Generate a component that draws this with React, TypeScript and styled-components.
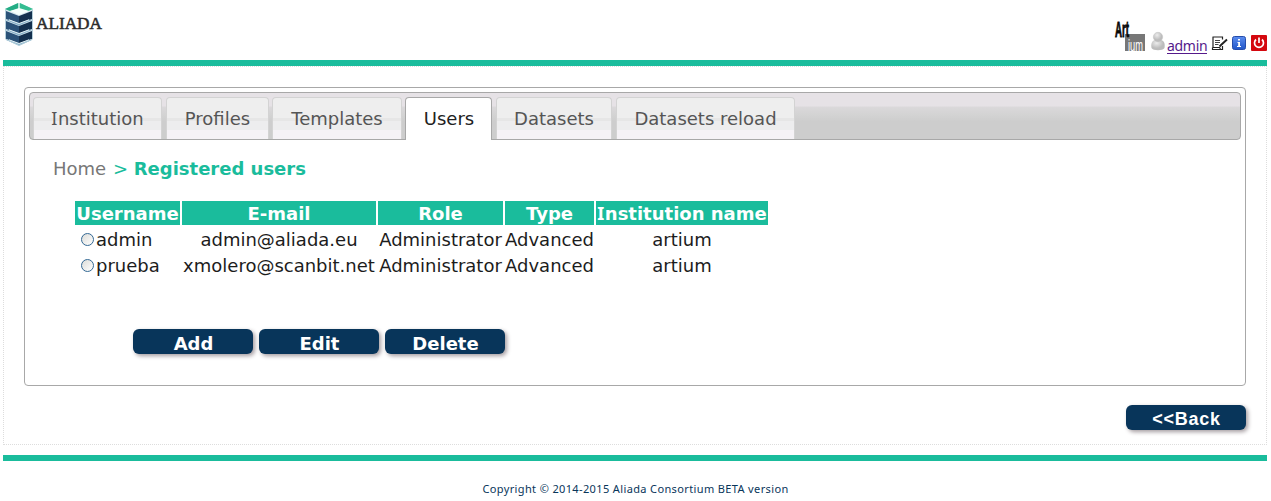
import React from 'react';
import styled, { createGlobalStyle, css } from 'styled-components';

const teal = '#1abc9c';
const navy = '#08355a';
const sans = "'DejaVu Sans', Verdana, sans-serif";

const GlobalStyle = createGlobalStyle`
  * { box-sizing: border-box; }
  body { margin: 0; background: #fff; font-family: ${sans}; font-size: 18px; color: #1c1c1c; overflow: hidden; }
`;

const Page = styled.div`
  width: 1264px;
  height: 501px;
  margin-left: 3px;
  display: flex;
  flex-direction: column;
`;

const Header = styled.header`
  height: 60px;
  flex: none;
  display: flex;
  justify-content: space-between;
`;

const Brand = styled.div`
  display: flex;
  padding: 2px 0 0 2px;
  svg { display: block; }
`;

const UserBar = styled.div`
  display: flex;
  align-items: flex-end;
  height: 55px;
  svg { display: block; flex: none; overflow: visible; }
`;

const IconSlot = styled.span<{ $left: number; $bottom: number }>`
  margin-left: ${(p) => p.$left}px;
  margin-bottom: ${(p) => p.$bottom}px;
`;

const UserLink = styled.a`
  font: 14px/20px 'Noto Sans', sans-serif;
  letter-spacing: -0.3px;
  width: 40px;
  height: 18px;
  margin-left: 2px;
  margin-bottom: 1px;
  white-space: nowrap;
  color: #551a8b;
  border-bottom: 1px solid #551a8b;
  text-decoration: none;
`;

const Rule = styled.div`
  height: 6px;
  flex: none;
  background: ${teal};
`;

const Content = styled.main`
  height: 379px;
  flex: none;
  margin-bottom: 10px;
  padding: 20px 20px 0;
  border: 1px dotted #ddd;
  display: flex;
  flex-direction: column;
`;

const Panel = styled.section`
  height: 299px;
  flex: none;
  padding: 4px;
  border: 1px solid #a8a8a8;
  border-radius: 4px;
`;

const TabBar = styled.nav`
  height: 48px;
  display: flex;
  align-items: flex-end;
  padding-left: 3px;
  border: 1px solid #a8a8a8;
  border-radius: 4px;
  background: linear-gradient(#e6e2e6 0 28%, #dad8da 31%, #d3d3d3 48%, #cdcdcd 62%, #cdcdcd);
`;

const Tab = styled.a<{ $width: number; $gap: number; $active?: boolean }>`
  width: ${(p) => p.$width}px;
  height: 42px;
  margin-right: ${(p) => p.$gap}px;
  padding-top: 1px;
  line-height: 40px;
  text-align: center;
  white-space: nowrap;
  color: #555;
  border: 1px solid #d3d3d3;
  border-bottom: 0;
  border-radius: 4px 4px 0 0;
  background: linear-gradient(#eee 0 50%, #e6e6e6 50% 57%, #ededee 57% 79%, #f5f2f6 79%);
  ${(p) => p.$active && css`
    height: 43px;
    margin-bottom: -1px;
    padding-left: 1px;
    color: #212121;
    border-color: #a8a8a8;
    background: #fff;
  `}
`;

const SlabI = styled.span`
  font-family: 'Noto Sans', sans-serif;
  line-height: 1;
  letter-spacing: 0.5px;
`;

const Breadcrumb = styled.div`
  margin: 17px 0 0 24px;
  height: 24px;
  line-height: 24px;
  color: ${teal};
  white-space: pre;
`;
const Muted = styled.span`
  color: #777;
  margin-right: 1px;
`;

const Table = styled.table`
  margin: 18px 0 0 44px;
  border-spacing: 2px;
  table-layout: fixed;
  width: 697px;
`;
const Th = styled.th<{ $width: number }>`
  width: ${(p) => p.$width}px;
  height: 24px;
  padding: 1px 0 0;
  line-height: 23px;
  white-space: nowrap;
  color: #fff;
  background: ${teal};
`;
const Td = styled.td<{ $left?: boolean }>`
  height: 24px;
  padding: 1px 0 0;
  line-height: 23px;
  white-space: nowrap;
  text-align: ${(p) => (p.$left ? 'left' : 'center')};
`;

const Choice = styled.label`
  display: flex;
  align-items: center;
`;
const Radio = styled.input`
  appearance: none;
  width: 13px;
  height: 13px;
  margin: 0 2px 0 6px;
  border: 1px solid #336894;
  border-radius: 50%;
  background: linear-gradient(135deg, #dcdcd8, #fff);
`;

const Actions = styled.div`
  display: flex;
  gap: 6px;
  margin: 50px 0 0 104px;
`;
const Button = styled.button<{ $back?: boolean }>`
  width: 120px;
  height: 25px;
  flex: none;
  padding: 2px 0 0 1px;
  border: 0;
  border-radius: 6px;
  background: ${navy};
  color: #fff;
  font: bold 18px/25px ${sans};
  box-shadow: 2px 2px 4px #a49ca0;
  ${(p) => p.$back && css`
    align-self: flex-end;
    margin-top: 19px;
    padding-top: 0;
    font: bold 18px/28px 'Liberation Sans', Arial, sans-serif;
    letter-spacing: 0.7px;
  `}
`;

const Footer = styled.footer`
  padding: 20px 0 0 1px;
  text-align: center;
  font: 11px/16px 'Noto Sans', sans-serif;
  letter-spacing: 0.37px;
  color: ${navy};
`;

const Institution = () => <><SlabI>I</SlabI>nstitution</>;

const tabs = [
  { label: <Institution />, width: 129, gap: 4 },
  { label: 'Profiles', width: 103, gap: 3 },
  { label: 'Templates', width: 130, gap: 3 },
  { label: 'Users', width: 87, gap: 4, active: true },
  { label: 'Datasets', width: 116, gap: 4 },
  { label: 'Datasets reload', width: 179, gap: 0 },
];

const users = [
  ['admin', 'admin@aliada.eu', 'Administrator', 'Advanced', 'artium'],
  ['prueba', 'xmolero@scanbit.net', 'Administrator', 'Advanced', 'artium'],
];

const AliadaLogo = () => (
  <svg width="100" height="46" viewBox="0 0 100 46">
    <path d="M0 7 14 1 28 7V37L14 44 0 37Z" fill="#d5e6ee" />
    <path d="M0 7 14 1 28 7 14 12Z" fill="#b8eadb" />
    <path d="M0 7 13 1V7L5 9Z" fill="#24ad85" />
    <path d="M15 1 28 7 23 9 15 7Z" fill="#34bd91" />
    <path d="M5 9 14 6 24 9 14 13Z" fill="#f4fffc" />
    {[0, 10, 20].map((y) => (
      <g key={y} transform={`translate(0 ${y})`}>
        <path d="M1 9 14 14V22L1 17Z" fill="#2b5278" />
        <path d="M14 14 27 9V17L14 22Z" fill="#14304e" />
        <path d="M1 18 4 17.5 14 21.5 24 17.5 27 18 14 23.5Z" fill="#86afc7" />
        <path d="M4 17.8 14 21.5 24 17.8" stroke="#e6f3f7" fill="none" strokeWidth="1" />
      </g>
    ))}
    <path d="M0.5 8V37L14 43.5 27.5 37V8" stroke="#b4cfdb" fill="none" />
    <text x="31" y="27" textLength="66" lengthAdjust="spacingAndGlyphs" fontFamily="Liberation Serif, serif" fontSize="17.5" fill="#2c2c2c" stroke="#2c2c2c" strokeWidth=".55">ALIADA</text>
  </svg>
);

const ArtiumLogo = () => (
  <svg width="31" height="32" viewBox="0 0 31 32">
    <rect x="10" y="15" width="20" height="17" fill="#777" />
    <text x="0" y="18" textLength="14" lengthAdjust="spacingAndGlyphs" fontFamily="Liberation Sans, sans-serif" fontWeight="bold" fontSize="22" fill="#080808" stroke="#080808" strokeWidth=".9">Art</text>
    <text x="13" y="32" textLength="15" lengthAdjust="spacingAndGlyphs" fontFamily="Liberation Sans, sans-serif" fontSize="17" fill="#fff">ium</text>
  </svg>
);

const PersonIcon = () => (
  <svg width="14" height="19" viewBox="0 0 14 19">
    <defs><radialGradient id="person" cx=".4" cy=".3"><stop stopColor="#ececec" /><stop offset="1" stopColor="#bcbcbc" /></radialGradient></defs>
    <path d="M4 8C0 9 0 13 .5 16 2 19 12 19 13.5 16 14 13 14 9 10 8Z" fill="url(#person)" />
    <circle cx="7" cy="5" r="4.7" fill="url(#person)" stroke="#bbb" strokeWidth=".4" />
  </svg>
);

const EditIcon = () => (
  <svg width="17" height="15" viewBox="0 0 17 15">
    <path d="M1.5 1H11.5V3.5M11.5 10V13.5H1.5V11.5M2 1V11.5H8.5L9.5 13" fill="none" stroke="#222" strokeWidth="1.2" />
    <path d="M4 4.5H9M4 6.5H9M4 8.5H7.5" stroke="#444" />
    <path d="M16 3.5 10 9 8.5 10.5" stroke="#222" strokeWidth="1.9" fill="none" />
  </svg>
);

const InfoIcon = () => (
  <svg width="14" height="14" viewBox="0 0 14 14">
    <defs><linearGradient id="info" x2="0" y2="1"><stop stopColor="#5b8df0" /><stop offset="1" stopColor="#2055c8" /></linearGradient></defs>
    <rect x=".5" y=".5" width="13" height="13" rx="2" fill="url(#info)" stroke="#254caa" />
    <path d="M6 3H8V4.5H6ZM5.5 6H8V10H9V11H5V10H6.2V7H5.5Z" fill="#fff" />
  </svg>
);

const PowerIcon = () => (
  <svg width="16" height="16" viewBox="0 0 16 16">
    <rect width="16" height="16" rx="1" fill="#d4080f" />
    <path d="M5 4.5A4.5 4.5 0 1 0 11 4.5M8 2.5V8" fill="none" stroke="#fff" strokeWidth="1.7" />
  </svg>
);

export default function App() {
  return (
    <Page>
      <GlobalStyle />
      <Header>
        <Brand><AliadaLogo /></Brand>
        <UserBar>
          <IconSlot $left={0} $bottom={4}><ArtiumLogo /></IconSlot>
          <IconSlot $left={5} $bottom={4}><PersonIcon /></IconSlot>
          <UserLink>admin</UserLink>
          <IconSlot $left={4} $bottom={4}><EditIcon /></IconSlot>
          <IconSlot $left={4} $bottom={5}><InfoIcon /></IconSlot>
          <IconSlot $left={5} $bottom={4}><PowerIcon /></IconSlot>
        </UserBar>
      </Header>
      <Rule />
      <Content>
        <Panel>
          <TabBar>
            {tabs.map((t, i) => (
              <Tab key={i} $width={t.width} $gap={t.gap} $active={t.active}>{t.label}</Tab>
            ))}
          </TabBar>
          <Breadcrumb><Muted>Home</Muted>{' > '}<b>Registered users</b></Breadcrumb>
          <Table>
            <thead>
              <tr>
                <Th $width={105}>Username</Th>
                <Th $width={194}>E-mail</Th>
                <Th $width={125}>Role</Th>
                <Th $width={89}>Type</Th>
                <Th $width={172}><Institution /> name</Th>
              </tr>
            </thead>
            <tbody>
              {users.map(([name, ...rest]) => (
                <tr key={name}>
                  <Td $left><Choice><Radio type="radio" name="user" />{name}</Choice></Td>
                  {rest.map((v, i) => <Td key={i}>{v}</Td>)}
                </tr>
              ))}
            </tbody>
          </Table>
          <Actions>
            <Button>Add</Button>
            <Button>Edit</Button>
            <Button>Delete</Button>
          </Actions>
        </Panel>
        <Button $back>&lt;&lt;Back</Button>
      </Content>
      <Rule />
      <Footer>Copyright © 2014-2015 Aliada Consortium BETA version</Footer>
    </Page>
  );
}
